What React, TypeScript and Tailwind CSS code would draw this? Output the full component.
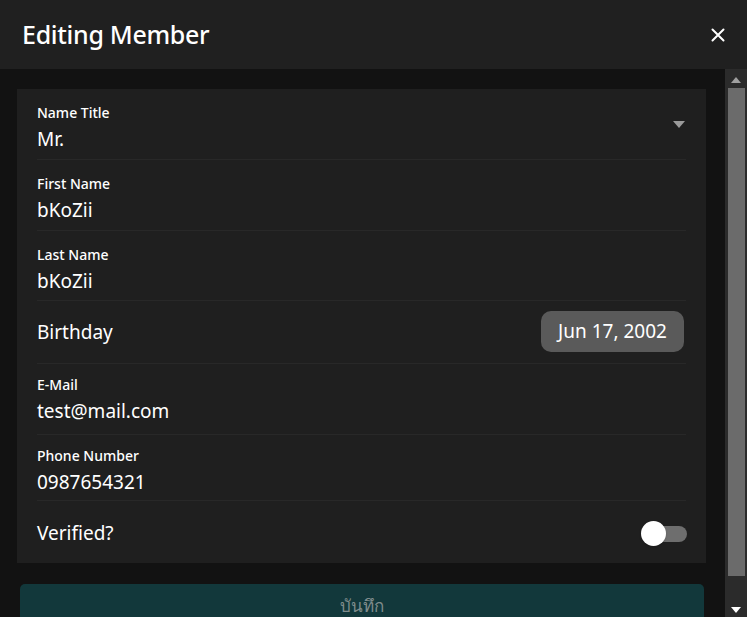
import React from 'react';

type Field = { label: string; value: string; select?: boolean; h: number; pt: number };

function TextRow({ label, value, select, h, pt }: Field) {
  return (
    <div className="flex justify-between border-b border-[#282828]" style={{ height: h, paddingTop: pt }}>
      <div className="flex flex-col">
        <span className="text-[14px] leading-[18px] font-medium text-white">{label}</span>
        <span className="text-[19px] leading-[26px] text-white mt-[4px]">{value}</span>
      </div>
      {select && (
        <svg width="12" height="7" viewBox="0 0 12 7" className="mt-[17px] mr-[1px]">
          <path d="M0 0 L12 0 L6 7 Z" fill="#9a9a9a" />
        </svg>
      )}
    </div>
  );
}

export default function App() {
  return (
    <div className="w-[747px] h-[617px] overflow-hidden bg-[#121212] flex flex-col" style={{ fontFamily: '"Noto Sans", "Open Sans", sans-serif' }}>
      <header className="h-[69px] bg-[#202020] flex items-center justify-between pl-[22px] pr-[22px] shrink-0">
        <h1 className="text-[25px] font-medium text-white tracking-[-0.3px]">Editing Member</h1>
        <svg width="14" height="14" viewBox="0 0 14 14">
          <path d="M1.5 1.5 L12.5 12.5 M12.5 1.5 L1.5 12.5" stroke="#fff" strokeWidth="2" strokeLinecap="round" />
        </svg>
      </header>

      <div className="flex flex-1 min-h-0">
        <main className="flex-1 pl-[17px] pr-[19px] pt-[20px] flex flex-col">
          <div className="bg-[#1f1f1f] px-[20px]">
            <TextRow label="Name Title" value="Mr." select h={71} pt={15} />
            <TextRow label="First Name" value="bKoZii" h={71} pt={15} />
            <TextRow label="Last Name" value="bKoZii" h={70} pt={15} />
            <div className="flex items-center justify-between h-[63px] border-b border-[#282828]">
              <span className="text-[19px] text-white">Birthday</span>
              <div className="bg-[#5a5a5a] rounded-[10px] h-[41px] w-[143px] flex items-center justify-center mr-[2px] mb-[1px]">
                <span className="text-[19px] text-white">Jun 17, 2002</span>
              </div>
            </div>
            <TextRow label="E-Mail" value="test@mail.com" h={71} pt={12} />
            <TextRow label="Phone Number" value="0987654321" h={66} pt={12} />
            <div className="flex items-center justify-between h-[62px] pt-[3px]">
              <span className="text-[19px] text-white">Verified?</span>
              <div className="relative w-[46px] h-[26px] mr-[-1px] flex items-center">
                <div className="absolute right-0 w-[36px] h-[16px] rounded-full bg-[#6e6e6e]" />
                <div className="absolute left-0 w-[25px] h-[25px] rounded-full bg-white shadow" />
              </div>
            </div>
          </div>

          <button className="mt-[21px] ml-[3px] mr-[2px] h-[50px] bg-[#12383b] rounded-t-[5px] flex items-start justify-center pt-[7px]">
            <span className="text-[17px] leading-[30px] text-[#7f8c8c]">บันทึก</span>
          </button>
        </main>

        <aside className="w-[22px] bg-[#2b2b2b] flex flex-col items-center shrink-0">
          <svg width="10" height="6" viewBox="0 0 10 6" className="mt-[8px]">
            <path d="M0 6 L10 6 L5 0 Z" fill="#a0a0a0" />
          </svg>
          <div className="mt-[5px] w-[17px] h-[488px] bg-[#6b6b6b]" />
          <div className="flex-1" />
          <svg width="10" height="6" viewBox="0 0 10 6" className="mb-[4px]">
            <path d="M0 0 L10 0 L5 6 Z" fill="#ffffff" />
          </svg>
        </aside>
      </div>
    </div>
  );
}
